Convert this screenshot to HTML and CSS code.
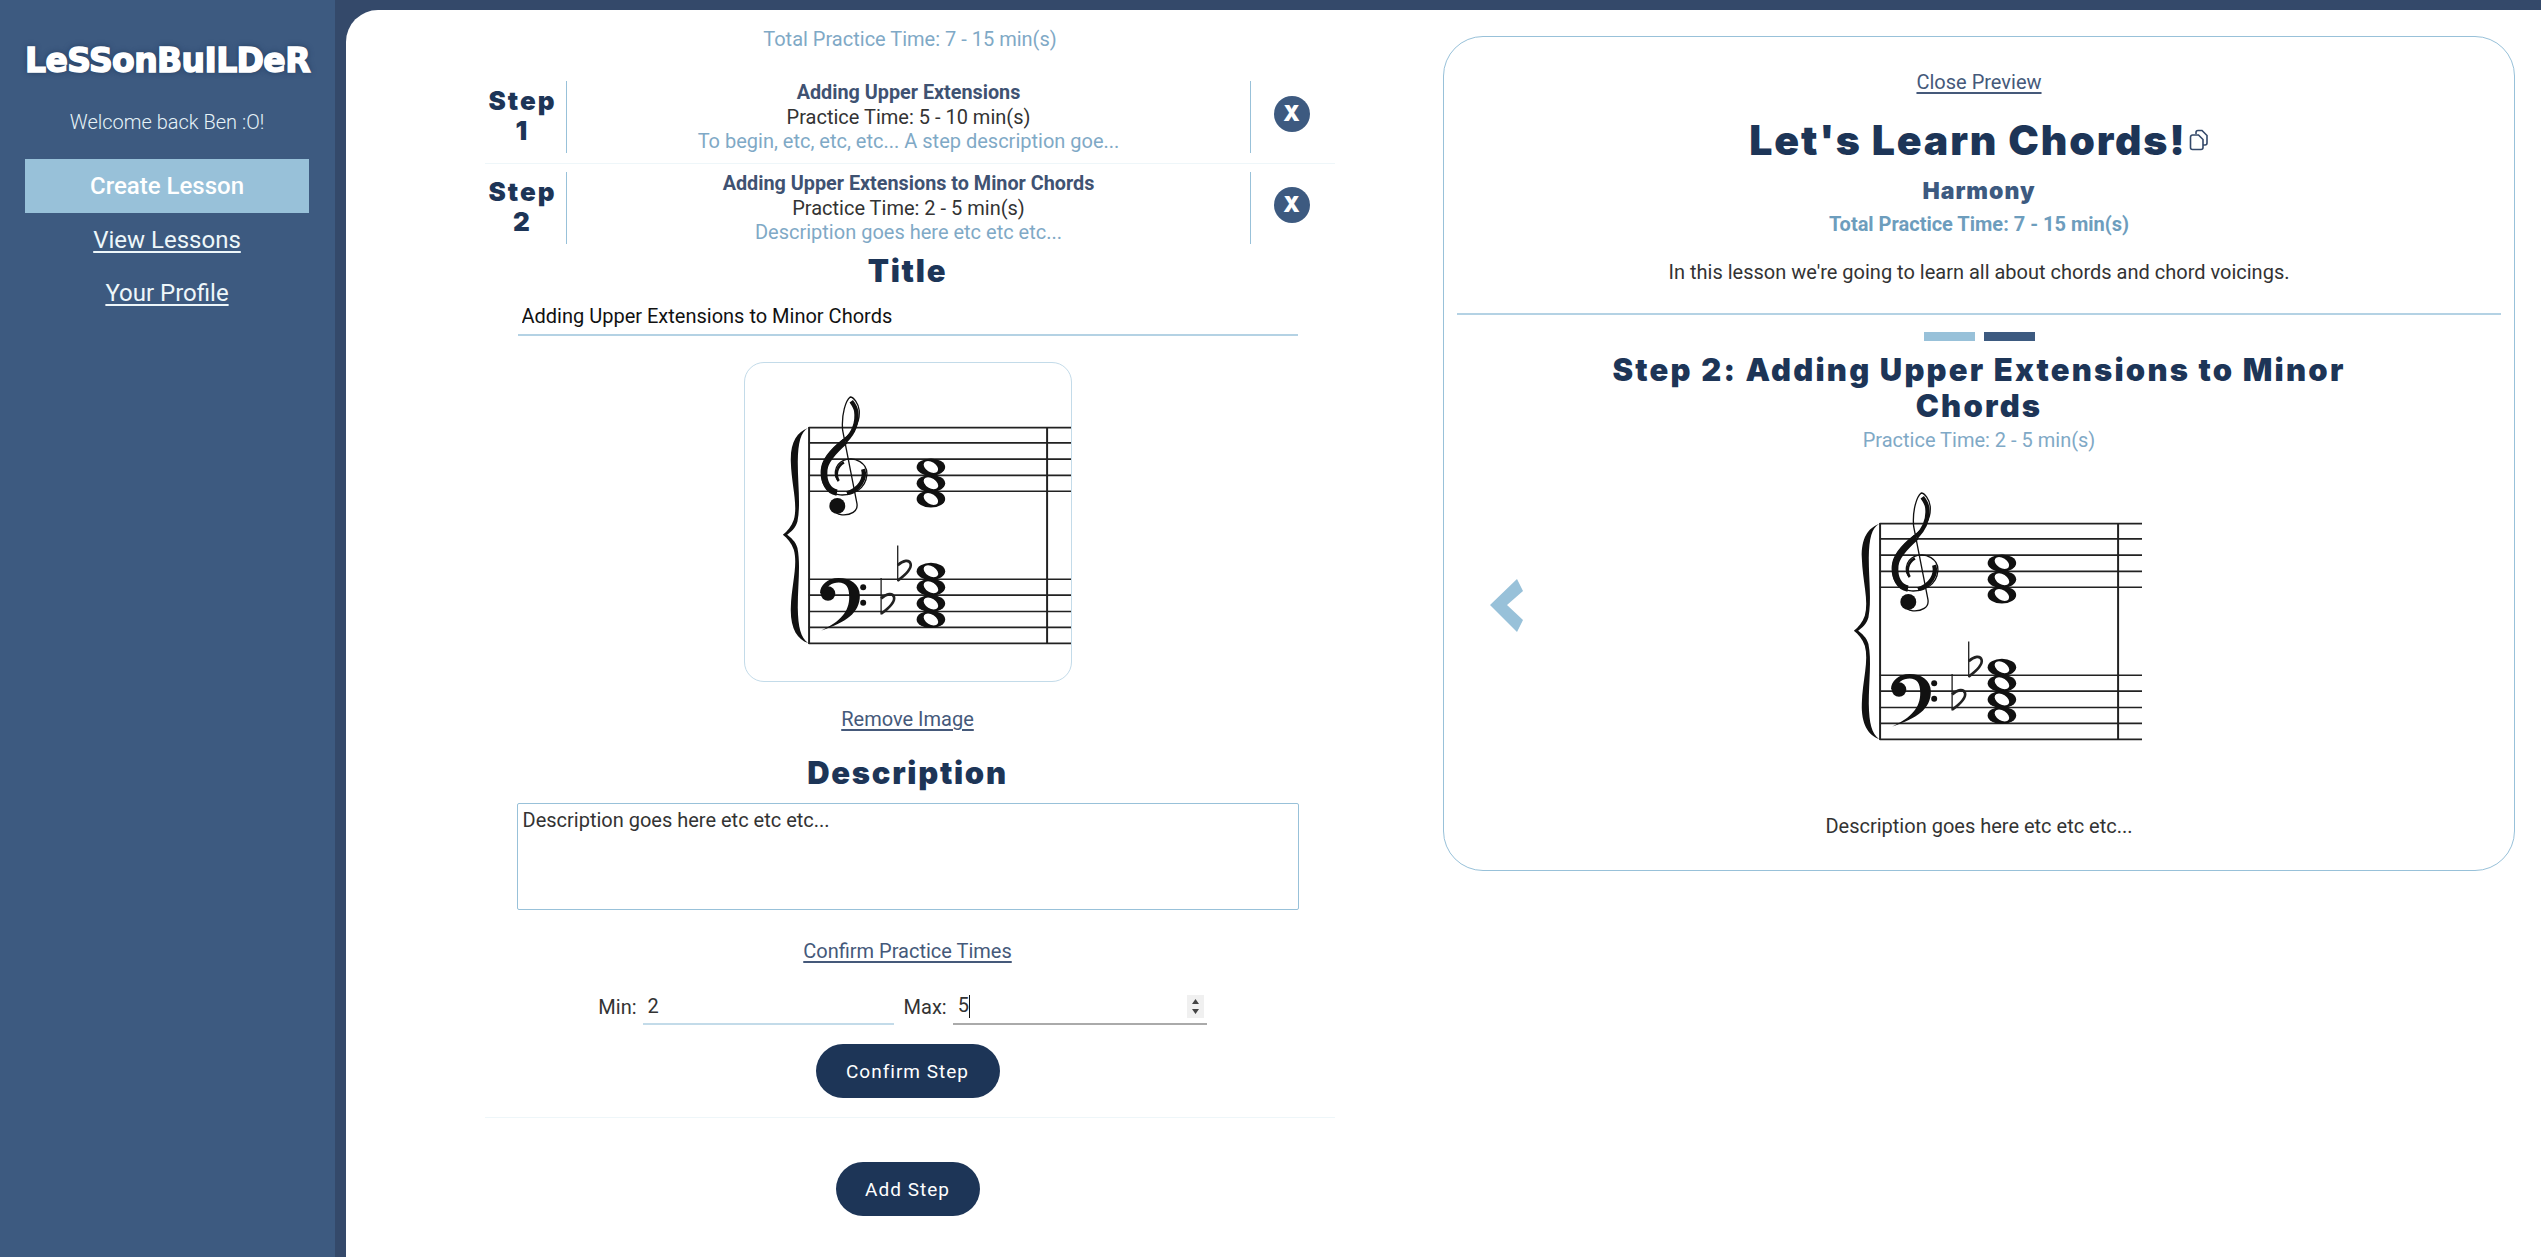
FILE: index.html
```html
<!DOCTYPE html>
<html lang="en">
<head>
    <meta charset="UTF-8">
    <meta name="viewport" content="width=device-width, initial-scale=1.0">
    <title>LessonBuilder</title>
    <link rel="stylesheet" href="styles.css">
</head>
<body>
    <!-- the chord picture, used by the form and by the preview -->
    <svg class="defs" aria-hidden="true">
        <g id="note">
            <ellipse cx="0" cy="0" rx="43" ry="26" fill="#111"/>
            <ellipse cx="0" cy="0" rx="24" ry="15" fill="#fff" transform="rotate(32)"/>
        </g>
        <symbol id="chord-sheet" viewBox="68 33 982 957">
            <g stroke="#222" stroke-width="5" fill="none">
                <path d="M260 227H1050M260 273H1050M260 322H1050M260 371H1050M260 419H1050"/>
                <path d="M260 684H1050M260 732H1050M260 781H1050M260 829H1050M260 877H1050"/>
                <path d="M261 225V879M978 225V879" stroke-width="6"/>
            </g>
            <!-- brace -->
            <path d="M258 228C225 240 204 270 206 330C208 400 228 460 215 505C208 525 195 540 182 550C195 560 208 575 215 595C228 640 208 700 206 770C204 830 225 865 258 876C236 860 228 830 227 770C227 700 236 640 226 590C221 570 205 558 195 550C205 542 221 530 226 510C236 460 227 400 227 330C228 270 236 240 258 228Z" fill="#111"/>
            <!-- treble clef -->
            <g fill="none" stroke="#111">
                <path stroke-width="4" d="M350 388C335 375 335 340 365 326C400 312 438 335 435 370C432 410 395 432 355 430C315 428 295 395 298 355C300 320 335 285 365 262C395 238 415 215 412 175C410 155 395 135 385 135C372 145 358 185 362 235L405 455C410 480 385 492 360 490C345 488 335 480 330 470"/>
                <path stroke-width="19" d="M345 423C317 418 304 390 307 354C310 324 338 296 370 268"/>
                <path stroke-width="13" d="M370 268C392 246 408 215 403 178C401 166 394 156 388 148"/>
                <path stroke-width="13" d="M424 352C432 380 415 412 375 425"/>
                <path stroke-width="8" d="M350 388C340 372 342 345 366 332"/>
            </g>
            <circle cx="346" cy="463" r="24" fill="#111"/>
            <!-- bass clef -->
            <path d="M298 838C372 815 414 785 414 733C414 698 385 680 350 680C316 680 294 702 294 726L310 726C312 706 330 694 350 694C372 694 382 708 382 738C382 780 356 812 298 838Z" fill="#111"/>
            <circle cx="318" cy="727" r="22" fill="#111"/>
            <circle cx="424" cy="708" r="9" fill="#111"/>
            <circle cx="424" cy="755" r="9" fill="#111"/>
            <!-- flats -->
            <g fill="none" stroke="#222">
                <path stroke-width="4" d="M478 680V790M528 582V690"/>
                <path stroke-width="8" d="M478 788C505 768 520 752 517 738C513 724 495 726 478 742"/>
                <path stroke-width="8" d="M528 688C555 668 570 652 567 638C563 624 545 626 528 642"/>
            </g>
            <!-- whole notes -->
            <use href="#note" x="628" y="346"/>
            <use href="#note" x="628" y="395"/>
            <use href="#note" x="628" y="442"/>
            <use href="#note" x="628" y="660"/>
            <use href="#note" x="628" y="708"/>
            <use href="#note" x="628" y="757"/>
            <use href="#note" x="628" y="805"/>
        </symbol>
    </svg>

    <div class="app">
        <!-- 侧边栏 -->
        <nav class="sidebar">
            <h1 class="logo">LeSSonBuILDeR</h1>
            <p class="welcome">Welcome back Ben :O!</p>
            <a class="nav-link active">Create Lesson</a>
            <a class="nav-link">View Lessons</a>
            <a class="nav-link">Your Profile</a>
        </nav>

        <main class="main">
            <!-- 左边：步骤表单 -->
            <section class="builder">
                <p class="total-time">Total Practice Time: 7 - 15 min(s)</p>

                <div class="step-row">
                    <div class="step-num">Step<br>1</div>
                    <div class="step-info">
                        <b>Adding Upper Extensions</b>
                        <span>Practice Time: 5 - 10 min(s)</span>
                        <em>To begin, etc, etc, etc... A step description goe...</em>
                    </div>
                    <div class="step-del"><i class="del-btn">X</i></div>
                </div>
                <div class="step-row">
                    <div class="step-num">Step<br>2</div>
                    <div class="step-info">
                        <b>Adding Upper Extensions to Minor Chords</b>
                        <span>Practice Time: 2 - 5 min(s)</span>
                        <em>Description goes here etc etc etc...</em>
                    </div>
                    <div class="step-del"><i class="del-btn">X</i></div>
                </div>

                <div class="step-form">
                    <h2 class="form-title">Title</h2>
                    <input class="title-input" type="text" value="Adding Upper Extensions to Minor Chords">
                    <div class="image-box">
                        <svg class="chord-img"><use href="#chord-sheet"/></svg>
                    </div>
                    <a class="text-link remove-link">Remove Image</a>
                    <h2 class="form-title desc-title">Description</h2>
                    <textarea class="desc-input">Description goes here etc etc etc...</textarea>
                    <a class="text-link confirm-link">Confirm Practice Times</a>
                    <div class="times">
                        <label for="min">Min:</label>
                        <input id="min" class="time-input" type="text" value="2">
                        <label for="max" class="max-label">Max:</label>
                        <div class="time-input focused">5<i class="caret"></i>
                            <svg class="spinner" viewBox="0 0 17 23"><rect width="17" height="23" fill="#f0f0f0"/><path d="M8.5 4l3.5 5h-7zM8.5 19l-3.5-5h7z" fill="#444"/></svg>
                        </div>
                    </div>
                    <button class="pill-btn confirm-btn">Confirm Step</button>
                </div>
                <div class="add-wrap">
                    <button class="pill-btn add-btn">Add Step</button>
                </div>
            </section>

            <!-- 右边：预览 -->
            <section class="preview">
                <a class="text-link close-link">Close Preview</a>
                <div class="lesson-title">
                    <h2>Let's Learn Chords!</h2>
                    <svg class="copy-icon" viewBox="0 0 20 22" fill="none" stroke="#34496a" stroke-width="1.6">
                        <path d="M7 5V3.5a2 2 0 0 1 2-2h4l5 5V14a2 2 0 0 1-2 2h-2"/>
                        <path d="M3.5 6h6l4.5 4.5V18.5a2 2 0 0 1-2 2H3.5a2 2 0 0 1-2-2V8a2 2 0 0 1 2-2z" fill="#fff"/>
                    </svg>
                </div>
                <h3 class="subject">Harmony</h3>
                <p class="preview-total">Total Practice Time: 7 - 15 min(s)</p>
                <p class="lesson-desc">In this lesson we're going to learn all about chords and chord voicings.</p>
                <hr class="preview-line">
                <div class="pips"><i class="pip"></i><i class="pip pip-on"></i></div>
                <h2 class="step-title">Step 2: Adding Upper Extensions to Minor Chords</h2>
                <p class="step-time">Practice Time: 2 - 5 min(s)</p>
                <div class="carousel">
                    <svg class="prev-arrow" viewBox="0 0 33 53"><path d="M27 0l6 12-16 14 16 15-6 12L0 26z" fill="#98c1d9"/></svg>
                    <svg class="chord-img"><use href="#chord-sheet"/></svg>
                </div>
                <p class="step-desc">Description goes here etc etc etc...</p>
            </section>
        </main>
    </div>
</body>
</html>
```

FILE: styles.css
```css
*{
    box-sizing: border-box;
}
body{
    margin: 0;
    height: 1257px;
    overflow: hidden;
    background-color: #34496a;
    font-family: Roboto, "Liberation Sans", sans-serif;
    font-size: 20px;
    color: #333;
}
a{
    cursor: pointer;
}
.defs{
    position: absolute;
    width: 0;
    height: 0;
}
.app{
    display: flex;
    height: 100%;
}

/* 侧边栏 */
.sidebar{
    flex: none;
    width: 335px;
    margin-right: 11px;
    padding: 0 26px 0 25px;
    background-color: #3d5a80;
    text-align: center;
}
.logo{
    margin: 40px 0 0;
    font-family: "DejaVu Sans", sans-serif;
    font-size: 33px;
    line-height: 42px;
    font-weight: 700;
    letter-spacing: -0.6px;
    color: #fff;
    text-shadow: 0 0 6px #1d3557;
    -webkit-text-stroke: 1.5px #fff;
    white-space: nowrap;
}
.welcome{
    margin: 28px 0 0;
    line-height: 24px;
    font-weight: 300;
    color: #e6f3f8;
}
.nav-link{
    display: block;
    height: 53.5px;
    font-size: 24px;
    line-height: 55px;
    color: #eef7fa;
    text-decoration: underline;
    text-underline-offset: 3px;
}
.active{
    margin-top: 25px;
    background-color: #98c1d9;
    font-weight: 500;
    color: #fff;
    text-decoration: none;
}

/* 主区域 */
.main{
    flex: 1;
    display: flex;
    align-items: flex-start;
    margin-top: 10px;
    padding-left: 139px;
    padding-right: 26px;
    background-color: #fff;
    border-top-left-radius: 32px;
}
.builder{
    flex: none;
    width: 850px;
    margin-right: 108px;
    text-align: center;
}
.total-time{
    margin: 17px 0 23px;
    line-height: 24px;
    color: #7fa9c6;
}
.step-row{
    display: flex;
    padding: 7px 0 10px;
    border-bottom: 1px solid #eef6f9;
}
.step-row:nth-of-type(2){
    padding: 8px 0 11px;
    border-bottom: 0;
}
.step-num{
    flex: none;
    width: 82px;
    padding-top: 5px;
    border-right: 1px solid #98c1d9;
    padding-right: 6px;
    font-family: Inter, sans-serif;
    font-size: 26px;
    font-weight: 900;
    line-height: 30px;
    letter-spacing: 2px;
    color: #1d3557;
}
.step-info{
    flex: 1;
    display: flex;
    flex-direction: column;
    height: 72px;
    line-height: 24px;
}
.step-info b{
    font-weight: 700;
    font-size: 19.8px;
    color: #3f5272;
}
.step-info em{
    font-style: normal;
    color: #7fa9c6;
}
.step-del{
    flex: none;
    width: 85px;
    padding: 0 3px 6px 0;
    display: flex;
    align-items: center;
    justify-content: center;
    border-left: 1px solid #98c1d9;
}
.del-btn{
    display: block;
    width: 36px;
    height: 36px;
    border-radius: 50%;
    background-color: #3d5a80;
    font-family: Inter, sans-serif;
    font-style: normal;
    font-weight: 900;
    font-size: 21px;
    line-height: 36px;
    color: #fff;
}

/* 表单 */
.step-form{
    display: flex;
    flex-direction: column;
    align-items: center;
    padding-right: 5px;
    padding-bottom: 19px;
    border-bottom: 1px solid #eef6f9;
}
.form-title{
    margin: 0;
    font-family: Inter, sans-serif;
    font-size: 31px;
    font-weight: 900;
    line-height: 32px;
    letter-spacing: 1.7px;
    color: #1d3557;
}
.title-input{
    width: 780px;
    height: 36px;
    margin-top: 13px;
    padding: 0 4px 2px;
    border: 0;
    border-bottom: 2px solid #b4d2e4;
    outline: none;
    font-family: Roboto, sans-serif;
    font-size: 20px;
    color: #111;
}
.image-box{
    width: 328px;
    height: 320px;
    margin-top: 26px;
    border: 1px solid #c3dbe9;
    border-radius: 20px;
    overflow: hidden;
}
.chord-img{
    display: block;
    width: 326px;
    height: 318px;
}
.text-link{
    color: #45597a;
    text-decoration: underline;
    text-underline-offset: 3px;
}
.remove-link{
    margin-top: 25px;
    line-height: 24px;
}
.desc-title{
    margin-top: 26px;
}
.desc-input{
    display: block;
    width: 782px;
    height: 107px;
    margin-top: 14px;
    padding: 4px 5px;
    border: 1px solid #98c1d9;
    border-radius: 2px;
    outline: none;
    resize: none;
    font-family: Roboto, sans-serif;
    font-size: 20px;
    color: #333;
}
.confirm-link{
    margin-top: 29px;
    line-height: 24px;
}
.times{
    display: flex;
    align-items: center;
    margin-top: 25px;
    padding-right: 10px;
}
.time-input{
    position: relative;
    width: 251px;
    height: 37px;
    margin-left: 6px;
    padding: 0 5px;
    border: 0;
    border-bottom: 2px solid #c3dbe9;
    outline: none;
    font-family: Roboto, sans-serif;
    font-size: 20px;
    line-height: 35px;
    text-align: left;
    color: #333;
}
.max-label{
    margin-left: 10px;
}
.focused{
    width: 254px;
    padding-left: 5px;
    border-bottom-color: #aaa;
}
.caret{
    display: inline-block;
    width: 1px;
    height: 23px;
    vertical-align: middle;
    background-color: #111;
}
.spinner{
    position: absolute;
    right: 3px;
    top: 7px;
    width: 17px;
    height: 23px;
}
.pill-btn{
    display: block;
    height: 54px;
    border: 0;
    border-radius: 27px;
    background-color: #1d3557;
    font-family: Roboto, sans-serif;
    font-size: 19px;
    font-weight: 400;
    letter-spacing: 1px;
    color: #fff;
}
.confirm-btn{
    width: 184px;
    margin-top: 19px;
}
.add-wrap{
    padding-top: 44px;
    padding-right: 5px;
}
.add-btn{
    width: 144px;
    margin: 0 auto;
}

/* 预览 */
.preview{
    flex: none;
    width: 1072px;
    height: 835px;
    margin-top: 26px;
    padding: 33px 13px 0;
    border: 1px solid #98c1d9;
    border-radius: 40px;
    text-align: center;
}
.close-link{
    display: block;
    line-height: 24px;
}
.lesson-title{
    display: flex;
    justify-content: center;
    align-items: center;
    margin-top: 21px;
    height: 50px;
}
.lesson-title h2{
    margin: 0;
    font-family: Inter, sans-serif;
    font-size: 41px;
    font-weight: 900;
    letter-spacing: 1.85px;
    color: #1d3557;
    white-space: nowrap;
}
.copy-icon{
    width: 20px;
    height: 22px;
    margin-left: 2px;
}
.subject{
    margin: 11px 0 0;
    font-family: Inter, sans-serif;
    font-size: 23px;
    font-weight: 900;
    line-height: 30px;
    letter-spacing: 1px;
    color: #3d5a80;
}
.preview-total{
    margin: 6px 0 0;
    line-height: 24px;
    font-weight: 700;
    color: #6d9dbd;
}
.lesson-desc{
    margin: 24px 0 0;
    line-height: 24px;
}
.preview-line{
    margin: 29px 0 0;
    height: 2px;
    border: 0;
    background-color: #b4d2e4;
}
.pips{
    display: flex;
    justify-content: center;
    gap: 9px;
    margin-top: 17px;
}
.pip{
    display: block;
    width: 51px;
    height: 9px;
    background-color: #98c1d9;
}
.pip-on{
    background-color: #3d5a80;
}
.step-title{
    width: 800px;
    margin: 11px auto 0;
    font-family: Inter, sans-serif;
    font-size: 31px;
    font-weight: 900;
    line-height: 36px;
    letter-spacing: 2.2px;
    color: #1d3557;
}
.step-time{
    margin: 4px 0 0;
    line-height: 24px;
    color: #7fa9c6;
}
.carousel{
    position: relative;
    display: flex;
    justify-content: center;
    margin-top: 7px;
    height: 320px;
}
.prev-arrow{
    position: absolute;
    left: 33px;
    top: 120px;
    width: 33px;
    height: 53px;
}
.step-desc{
    margin: 35px 0 0;
    line-height: 24px;
}
```
